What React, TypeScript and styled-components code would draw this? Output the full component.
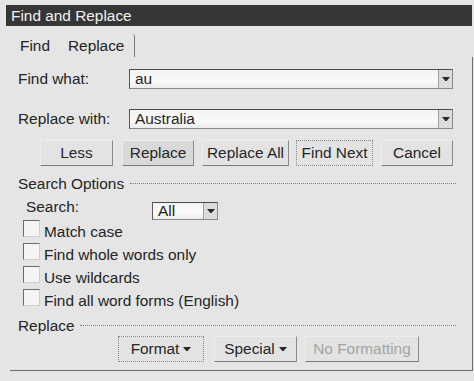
import styled, { createGlobalStyle } from 'styled-components';

const GlobalStyle = createGlobalStyle`
  html, body {
    margin: 0;
    padding: 0;
    background: #e5e5e5;
  }
  body {
    font-family: 'Liberation Sans', Arial, sans-serif;
    font-size: 15.4px;
    color: #242424;
  }
`;

const Window = styled.div`
  width: 474px;
  height: 381px;
  padding-top: 5px;
  box-sizing: border-box;
  overflow: hidden;
`;

const TitleBar = styled.div`
  margin: 0 2px 0 6px;
  height: 21px;
  line-height: 21px;
  padding-left: 5px;
  background: #363636;
  color: #f1f1f1;
`;

const TabBar = styled.div`
  display: flex;
  height: 31px;
  padding-left: 20px;
`;

const Tab = styled.div<{ $active?: boolean }>`
  margin-top: 8px;
  height: 23px;
  line-height: 23px;
  padding: ${(p) => (p.$active ? '0 10px 0 18px' : '0')};
  border-right: ${(p) => (p.$active ? '1px solid #7a7a7a' : 'none')};
  border-radius: 0 3px 0 0;
`;

const Panel = styled.div`
  margin-left: 10px;
  width: 454px;
  border-right: 1px solid #6e6e6e;
  border-bottom: 1px solid #6e6e6e;
  padding: 12px 0 8px 8px;
  box-sizing: content-box;
`;

const FieldRow = styled.div<{ $gap?: number }>`
  display: flex;
  align-items: center;
  height: 20px;
  margin-top: ${(p) => p.$gap ?? 0}px;
`;

const FieldLabel = styled.div`
  width: 111px;
`;

const Combo = styled.div<{ $width: number; $height: number }>`
  display: flex;
  width: ${(p) => p.$width}px;
  height: ${(p) => p.$height}px;
  box-sizing: border-box;
  border: 1px solid #8a8a8a;
  border-top-color: #4a4a4a;
  border-left-color: #5a5a5a;
  background: linear-gradient(#f3f3f3, #fafafa 60%, #ececec);
`;

const ComboText = styled.div`
  flex: 1;
  padding-left: 5px;
  display: flex;
  align-items: center;
`;

const ComboArrow = styled.div`
  width: 13px;
  border-left: 1px solid #a0a0a0;
  background: #dcdcdc;
  display: flex;
  align-items: center;
  justify-content: center;
`;

const ButtonRow = styled.div<{ $top: number; $left: number }>`
  display: flex;
  margin-top: ${(p) => p.$top}px;
  margin-left: ${(p) => p.$left}px;
`;

const Button = styled.div<{
  $width: number;
  $gap?: number;
  $focus?: boolean;
  $hover?: boolean;
  $disabled?: boolean;
}>`
  width: ${(p) => p.$width}px;
  height: 26px;
  margin-left: ${(p) => p.$gap ?? 0}px;
  box-sizing: border-box;
  display: flex;
  align-items: center;
  justify-content: center;
  gap: 4px;
  background: ${(p) => (p.$hover ? '#d9d9d9' : '#e3e3e3')};
  color: ${(p) => (p.$disabled ? '#a3a3a3' : '#262626')};
  border: 1px solid;
  border-color: ${(p) =>
    p.$focus ? '#8a8a8a' : '#ededed #8c8c8c #7a7a7a #ededed'};
  border-style: ${(p) => (p.$focus ? 'dotted' : 'solid')};
`;

const SectionHeader = styled.div<{ $top: number }>`
  display: flex;
  align-items: center;
  height: 17px;
  margin-top: ${(p) => p.$top}px;
  margin-right: 16px;
`;

const SectionLine = styled.div<{ $indent: number }>`
  flex: 1;
  margin-left: ${(p) => p.$indent}px;
  border-top: 1px dotted #858585;
`;

const SearchRow = styled.div`
  display: flex;
  height: 23px;
  margin-top: 5px;
  padding-left: 8px;
`;

const SearchLabel = styled.div`
  width: 126px;
  line-height: 20px;
`;

const SearchSelect = styled.div`
  align-self: flex-end;
`;

const CheckRow = styled.div`
  display: flex;
  height: 23px;
  padding-left: 5px;
`;

const CheckBox = styled.div`
  width: 17px;
  height: 17px;
  box-sizing: border-box;
  border-top: 1px solid #6a6a6a;
  border-left: 1px solid #6a6a6a;
  border-right: 1px solid #cfcfcf;
  border-bottom: 1px solid #cfcfcf;
  background: #f4f4f4;
`;

const CheckLabel = styled.div`
  margin-left: 4px;
  line-height: 23px;
`;

const Arrow = ({ size = 8 }: { size?: number }) => (
  <svg width={size} height={size * 0.6} viewBox="0 0 10 6">
    <path d="M0 0 L10 0 L5 6 Z" fill="#2a2a2a" />
  </svg>
);

const checks = [
  'Match case',
  'Find whole words only',
  'Use wildcards',
  'Find all word forms (English)',
];

export default function App() {
  return (
    <>
      <GlobalStyle />
      <Window>
        <TitleBar>Find and Replace</TitleBar>
        <TabBar>
          <Tab>Find</Tab>
          <Tab $active>Replace</Tab>
        </TabBar>
        <Panel>
          <FieldRow>
            <FieldLabel>Find what:</FieldLabel>
            <Combo $width={324} $height={20}>
              <ComboText>au</ComboText>
              <ComboArrow>
                <Arrow />
              </ComboArrow>
            </Combo>
          </FieldRow>
          <FieldRow $gap={20}>
            <FieldLabel>Replace with:</FieldLabel>
            <Combo $width={324} $height={20}>
              <ComboText>Australia</ComboText>
              <ComboArrow>
                <Arrow />
              </ComboArrow>
            </Combo>
          </FieldRow>
          <ButtonRow $top={11} $left={22}>
            <Button $width={73}>Less</Button>
            <Button $width={72} $gap={9} $hover>
              Replace
            </Button>
            <Button $width={87} $gap={8}>
              Replace All
            </Button>
            <Button $width={77} $gap={7} $focus>
              Find Next
            </Button>
            <Button $width={72} $gap={8}>
              Cancel
            </Button>
          </ButtonRow>

          <SectionHeader $top={9}>
            Search Options
            <SectionLine $indent={6} />
          </SectionHeader>
          <SearchRow>
            <SearchLabel>Search:</SearchLabel>
            <SearchSelect>
              <Combo $width={66} $height={18}>
                <ComboText>All</ComboText>
                <ComboArrow>
                  <Arrow />
                </ComboArrow>
              </Combo>
            </SearchSelect>
          </SearchRow>
          {checks.map((label) => (
            <CheckRow key={label}>
              <CheckBox />
              <CheckLabel>{label}</CheckLabel>
            </CheckRow>
          ))}

          <SectionHeader $top={5}>
            Replace
            <SectionLine $indent={6} />
          </SectionHeader>
          <ButtonRow $top={2} $left={100}>
            <Button $width={86} $focus>
              Format <Arrow />
            </Button>
            <Button $width={83} $gap={10}>
              Special <Arrow />
            </Button>
            <Button $width={114} $gap={8} $disabled>
              No Formatting
            </Button>
          </ButtonRow>
        </Panel>
      </Window>
    </>
  );
}
